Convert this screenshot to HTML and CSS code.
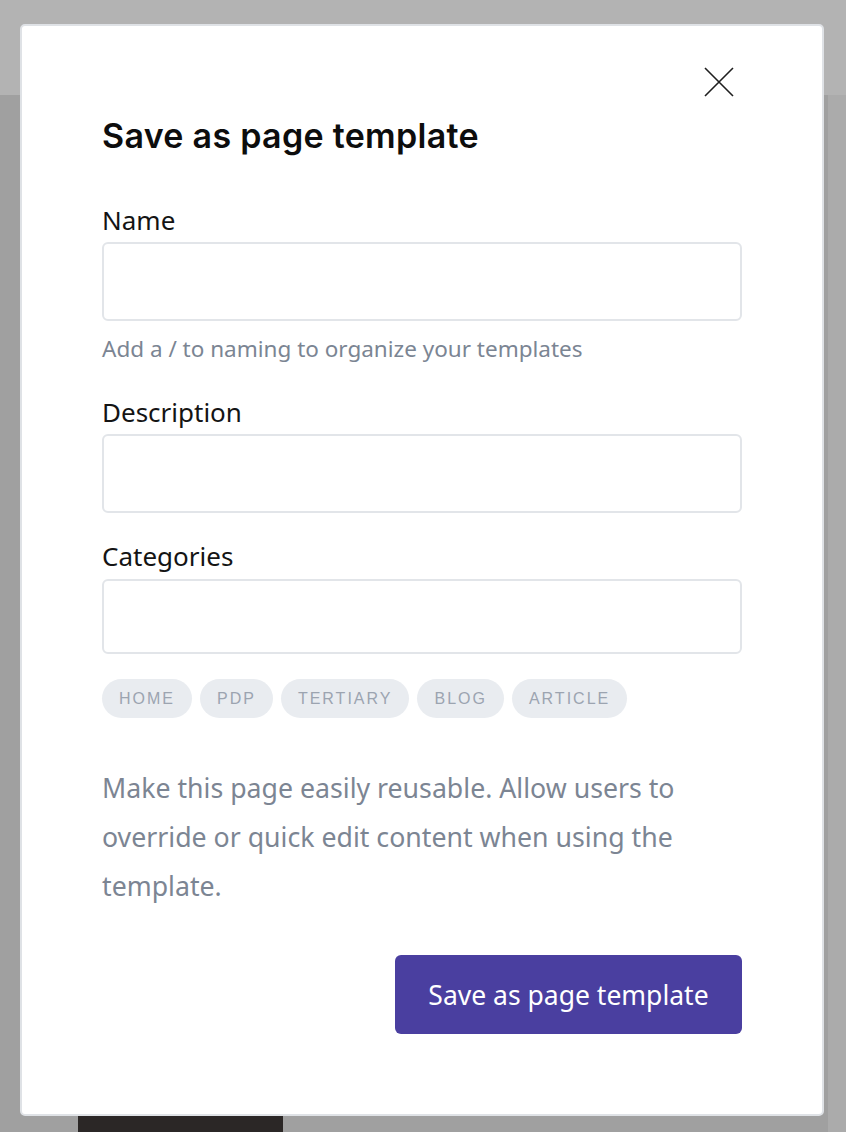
FILE: index.html
```html
<!DOCTYPE html>
<html lang="en">
<head>
    <meta charset="UTF-8">
    <meta name="viewport" content="width=device-width, initial-scale=1.0">
    <title>Save as page template</title>
    <link rel="stylesheet" href="styles.css">
</head>
<body>

    <!-- Page behind the dimmed overlay -->
    <div class="page">
        <div class="page-header"></div>
        <div class="page-body">
            <div class="page-main">
                <div class="page-thumb"></div>
            </div>
            <div class="page-side"></div>
        </div>
    </div>

    <!-- Save as template modal -->
    <div class="modal">
        <div class="modal-top">
            <button class="close-button" aria-label="Close">
                <svg width="30" height="30" viewBox="0 0 30 30">
                    <path d="M1 1 L29 29 M29 1 L1 29" stroke="#1f1f1f" stroke-width="1.6" fill="none"/>
                </svg>
            </button>
        </div>

        <h2 class="modal-title">Save as page template</h2>

        <div class="field field-first">
            <label class="field-label" for="nameInput">Name</label>
            <input class="field-input" type="text" id="nameInput">
            <div class="field-hint">Add a / to naming to organize your templates</div>
        </div>

        <div class="field">
            <label class="field-label" for="descInput">Description</label>
            <input class="field-input" type="text" id="descInput">
        </div>

        <div class="field field-cats">
            <label class="field-label" for="catInput">Categories</label>
            <input class="field-input field-input-short" type="text" id="catInput">
            <div class="tag-list">
                <span class="tag">Home</span>
                <span class="tag">PDP</span>
                <span class="tag">Tertiary</span>
                <span class="tag">Blog</span>
                <span class="tag">Article</span>
            </div>
        </div>

        <p class="modal-note">Make this page easily reusable. Allow users to override or quick edit content when using the template.</p>

        <div class="modal-actions">
            <button class="save-button">Save as page template</button>
        </div>
    </div>

</body>
</html>
```

FILE: styles.css
```css
/* Page behind the overlay */
body {
    margin: 0;
    height: 1132px;
    overflow: hidden;
    font-family: "Noto Sans", "Open Sans", sans-serif;
    background-color: #a0a0a0;
}

.page {
    display: flex;
    flex-direction: column;
    height: 100%;
}

.page-header {
    height: 95px;
    background-color: #b3b3b3;
}

.page-body {
    flex: 1;
    display: flex;
}

.page-main {
    flex: 1;
    display: flex;
    flex-direction: column;
    justify-content: flex-end;
    padding-left: 78px;
}

.page-thumb {
    width: 205px;
    height: 16px;
    background-color: #2b2726;
}

.page-side {
    width: 18px;
    background-color: #ababab;
}

/* Modal card */
.modal {
    position: absolute;
    left: 20px;
    top: 24px;
    width: 804px;
    height: 1092px;
    box-sizing: border-box;
    padding: 34px 80px 0 80px;
    background-color: #ffffff;
    border: 2px solid #dfe2e6;
    border-radius: 5px;
    color: #111111;
}

.modal-top {
    display: flex;
    justify-content: flex-end;
}

.close-button {
    width: 44px;
    height: 44px;
    padding: 0;
    border: none;
    background: none;
    display: flex;
    align-items: center;
    justify-content: center;
    margin-right: 1px;
}

.modal-title {
    margin: 10px 0 0 0;
    font-family: "Inter", sans-serif;
    font-size: 34px;
    font-weight: 600;
    letter-spacing: 0.3px;
    line-height: 44px;
    color: #0d0d0d;
}

.field {
    margin-top: 32px;
}

.field-first {
    margin-top: 46px;
}

.field-cats {
    margin-top: 27px;
}

.field-label {
    display: block;
    font-size: 26px;
    line-height: 32px;
    margin-bottom: 6px;
    color: #141414;
}

.field-input {
    display: block;
    width: 100%;
    height: 79px;
    box-sizing: border-box;
    border: 2px solid #e2e5e9;
    border-radius: 6px;
    font-size: 20px;
    padding: 0 16px;
}

.field-input-short {
    height: 75px;
    margin-top: 7px;
}

.field-hint {
    margin-top: 13px;
    font-size: 22.5px;
    line-height: 30px;
    color: #7b8593;
}

/* Category tags */
.tag-list {
    display: flex;
    gap: 8px;
    margin-top: 25px;
}

.tag {
    height: 39px;
    padding: 0 17px;
    display: flex;
    align-items: center;
    border-radius: 20px;
    background-color: #e9ecf0;
    color: #9ca4b0;
    font-family: "Liberation Sans", Arial, sans-serif;
    font-size: 16px;
    letter-spacing: 2px;
    text-transform: uppercase;
}

.modal-note {
    margin: 45px 0 0 0;
    font-size: 26.7px;
    line-height: 49px;
    color: #7c8593;
}

.modal-actions {
    display: flex;
    justify-content: flex-end;
    margin-top: 45px;
}

.save-button {
    width: 347px;
    height: 79px;
    border: none;
    border-radius: 6px;
    background-color: #4a3fa0;
    color: #ffffff;
    font-family: "Noto Sans", sans-serif;
    font-size: 26.5px;
}
```
